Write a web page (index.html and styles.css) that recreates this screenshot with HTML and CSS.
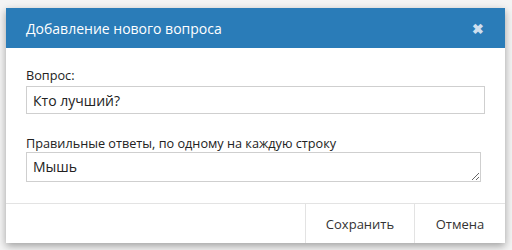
FILE: index.html
```html
<!DOCTYPE html>
<html>
<head>
    <meta charset="utf-8">
    <title>Добавление нового вопроса</title>
    <link rel="stylesheet" href="styles.css">
</head>
<body>
    <div class="backdrop">
        <div class="modal">
            <div class="modal-header">
                <span class="modal-title">Добавление нового вопроса</span>
                <span class="modal-close">&#x2716;</span>
            </div>
            <div class="modal-body">
                <label class="field-label">Вопрос:</label>
                <input class="field-input" type="text" value="Кто лучший?">
                <label class="field-label second">Правильные ответы, по одному на каждую строку</label>
                <textarea class="field-area">Мышь</textarea>
            </div>
            <div class="modal-footer">
                <button class="btn">Сохранить</button>
                <button class="btn cancel">Отмена</button>
            </div>
        </div>
    </div>
</body>
</html>
```

FILE: styles.css
```css
html,
body {
    margin: 0;
    padding: 0;
    width: 100%;
    height: 100%;
    overflow: hidden;
    background-color: #f4f4f4;
    font-family: "Open Sans", "Noto Sans", sans-serif;
}

.backdrop {
    padding: 8px 7px 0 6px;
}

.modal {
    background: #fff;
    box-shadow: 0 3px 8px rgba(0, 0, 0, 0.35);
    display: flex;
    flex-direction: column;
}

.modal-header {
    background-color: #2a7cb8;
    height: 40px;
    display: flex;
    align-items: center;
    justify-content: space-between;
    padding: 0 20px;
}

.modal-title {
    color: #fff;
    font-size: 14px;
}

.modal-close {
    color: #cfdfee;
    font-size: 14px;
    font-weight: bold;
    margin-right: 1px;
}

.modal-body {
    padding: 18px 20px 21px 20px;
    display: flex;
    flex-direction: column;
}

.field-label {
    font-size: 12.7px;
    color: #222;
    line-height: 18px;
    margin-bottom: 2px;
}

.field-label.second {
    margin-top: 20px;
    margin-bottom: 0;
}

.field-input,
.field-area {
    font-family: inherit;
    font-size: 14px;
    color: #222;
    border: 1px solid #cfcfcf;
    margin: 0;
    box-sizing: border-box;
}

.field-input {
    width: 459px;
    height: 28px;
    padding: 0 6px;
}

.field-area {
    width: 455px;
    height: 30px;
    padding: 4px 6px;
    resize: vertical;
    overflow: hidden;
}

.modal-footer {
    border-top: 1px solid #e3e3e3;
    display: flex;
    justify-content: flex-end;
    height: 39px;
}

.btn {
    font-family: inherit;
    font-size: 13px;
    color: #333;
    background: #fff;
    border: none;
    border-left: 1px solid #e3e3e3;
    padding: 0;
    width: 109px;
}

.btn.cancel {
    width: 91px;
}
```
